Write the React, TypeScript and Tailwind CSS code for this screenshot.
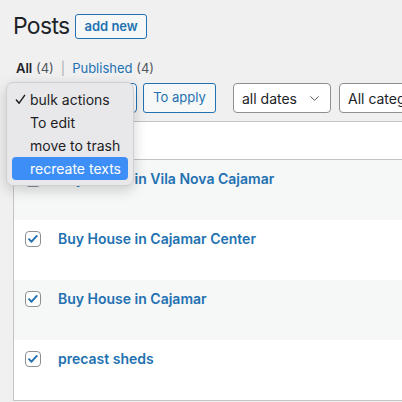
import { ChevronDown } from "lucide-react";

const rows = [
  { title: "Buy House in Vila Nova Cajamar", alt: true },
  { title: "Buy House in Cajamar Center", alt: false },
  { title: "Buy House in Cajamar", alt: true },
  { title: "precast sheds", alt: false },
];

const menuItems = ["bulk actions", "To edit", "move to trash", "recreate texts"];

function CheckBox() {
  return (
    <span className="flex h-4 w-4 shrink-0 items-center justify-center rounded-[4px] border border-[#8c8f94] bg-white">
      <svg viewBox="0 0 16 16" className="h-[14px] w-[14px]">
        <path
          d="M3.5 8.2l2.8 2.9 6-6.6"
          fill="none"
          stroke="#2271b1"
          strokeWidth="2.2"
          strokeLinecap="round"
          strokeLinejoin="round"
        />
      </svg>
    </span>
  );
}

export default function App() {
  return (
    <div
      className="relative h-[402px] w-[402px] overflow-hidden bg-[#f0f0f1] text-[#1d2327]"
      style={{ fontFamily: "Inter, 'Liberation Sans', sans-serif" }}
    >
      <div className="pl-[13px] pt-[14px]">
        <div className="flex items-center gap-[6px]">
          <h1 className="text-[23px] leading-[25px] font-normal tracking-[-0.7px]">Posts</h1>
          <button
            type="button"
            className="h-[25px] rounded-[3px] border border-[#2271b1] bg-[#f6f7f7] px-[8px] text-[13px] font-semibold text-[#2271b1]"
          >
            add new
          </button>
        </div>

        <p className="mt-[20px] pl-[3px] text-[13px] leading-[18px] text-[#50575e]">
          <span className="font-semibold text-[#1d2327]">All</span> (4)
          <span className="mx-[7px] text-[#a7aaad]">|</span>
          <span className="text-[#2271b1]">Published</span> (4)
        </p>

        <div className="mt-[6px] flex w-[500px] items-center whitespace-nowrap">
          <div className="flex h-[30px] w-[124px] shrink-0 items-center rounded-[4px] border border-[#2271b1] bg-white px-2 text-[14px]">
            bulk actions
          </div>
          <button
            type="button"
            className="ml-[6px] h-[30px] w-[73px] shrink-0 rounded-[3px] border border-[#2271b1] bg-[#f6f7f7] text-[13px] text-[#2271b1]"
          >
            To apply
          </button>
          <div className="ml-[17px] flex h-[30px] w-[98px] shrink-0 items-center justify-between rounded-[4px] border border-[#8c8f94] bg-white pl-[8px] pr-[8px] text-[14px]">
            <span>all dates</span>
            <ChevronDown size={15} strokeWidth={1.6} className="text-[#50575e]" />
          </div>
          <div className="ml-[8px] flex h-[30px] w-[120px] shrink-0 items-center rounded-[4px] border border-[#8c8f94] bg-white pl-[8px] text-[14px]">
            All categories
          </div>
        </div>

        <div className="mt-[8px] w-[420px] border-l border-t border-b border-[#c3c4c7] bg-white">
          <div className="h-[38px] border-b border-[#c3c4c7]" />
          {rows.map((row) => (
            <div
              key={row.title}
              className={`flex h-[60px] items-start gap-[17px] pl-[11px] pt-[11px] ${row.alt ? "bg-[#f6f7f7]" : "bg-white"}`}
            >
              <CheckBox />
              <span className="text-[14px] leading-[16px] font-semibold text-[#2271b1]">{row.title}</span>
            </div>
          ))}
        </div>
      </div>

      <div className="absolute left-[6px] top-[82px] w-[128px] rounded-[7px] border border-[#cfcfd3] bg-[#e8e8eb] px-[5px] py-[5px] shadow-[0_4px_14px_rgba(0,0,0,0.18)]">
        {menuItems.map((item, i) => (
          <div
            key={item}
            className={`relative flex h-[23px] items-center rounded-[4px] pl-[18px] text-[14px] ${i === 3 ? "bg-[#3d8ff7] text-white" : "text-[#1d1d1f]"}`}
          >
            {i === 0 && (
              <svg viewBox="0 0 12 12" className="absolute left-[3px] top-[6px] h-[11px] w-[11px]">
                <path d="M1.5 6.5l3 3.5 6-8.5" fill="none" stroke="#1d1d1f" strokeWidth="1.6" strokeLinecap="round" strokeLinejoin="round" />
              </svg>
            )}
            {item}
          </div>
        ))}
      </div>
    </div>
  );
}
